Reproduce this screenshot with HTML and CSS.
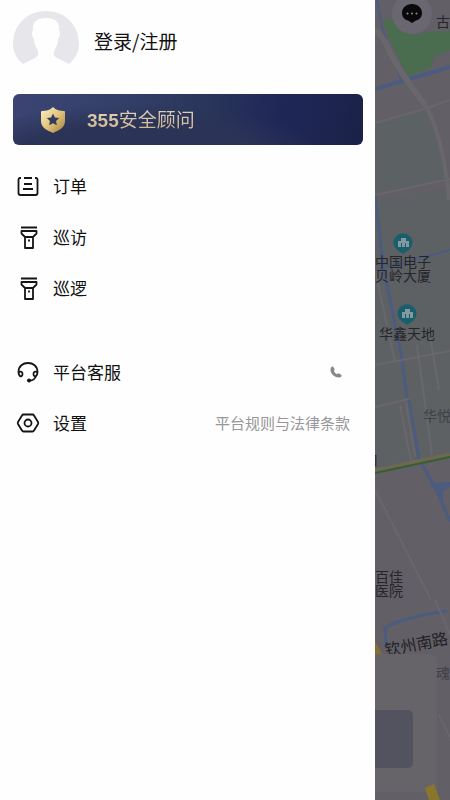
FILE: index.html
```
<!DOCTYPE html>
<html lang="zh-CN">

<head>
    <meta charset="utf-8">
    <meta name="viewport" content="width=device-width, initial-scale=1">
    <title>355安全顾问</title>
    <link rel="stylesheet" href="styles.css">
</head>

<body>
    <div class="screen">
        <div class="drawer">
            <a class="user" href="#login">
                <svg class="avatar" width="66" height="54" viewBox="0 0 66 54" aria-hidden="true">
                    <path fill="#e7e6ea" d="M10 53C3 47 0 40 0 33 0 14 14 0 33 0s33 14 33 33c0 7-3 14-10 20L44 47c-4-2-4-6-2-9 2-3 3-7 3-10 2-2 3-7 1-9 1-8-4-12-13-12S19 11 20 19c-2 2-1 7 1 9 0 3 1 7 3 10 2 3 2 7-2 9z"/>
                </svg>
                <span>登录/注册</span>
            </a>

            <a class="banner" href="#advisor">
                <svg width="26" height="28" viewBox="0 0 26 28" aria-hidden="true">
                    <defs>
                        <linearGradient id="gold" x1="0" y1="0" x2="1" y2="1">
                            <stop offset="0" stop-color="#fff0c4"/>
                            <stop offset=".5" stop-color="#e2c57f"/>
                            <stop offset="1" stop-color="#a37c38"/>
                        </linearGradient>
                    </defs>
                    <path fill="url(#gold)" d="M13 1c3 3 7 4 11 4q1 0 1 1v9c0 6-5 9-12 12C6 24 1 21 1 15V6q0-1 1-1c4 0 8-1 11-4z"/>
                    <path fill="#333c5c" d="M13 7.500l1.900 3.900 4.300.6-3.100 3 .7 4.200-3.800-2-3.800 2 .7-4.200-3.100-3 4.300-.6z"/>
                </svg>
                <span class="banner-text"><b>355</b>安全顾问</span>
            </a>

            <ul class="menu">
                <li>
                    <a href="#orders">
                        <svg class="icon" viewBox="0 0 24 24" aria-hidden="true">
                            <path d="M5 4H4Q2.500 4 2.500 6v13q0 2 2 2h15q2 0 2-2V6q0-2-1.500-2h-1M8 4h8M8 10h8M7 15h10"/>
                        </svg>
                        订单
                    </a>
                </li>
                <li>
                    <a href="#visits">
                        <svg class="icon" viewBox="0 0 24 24" aria-hidden="true">
                            <path d="M5 2.500h16M5.500 6h15v2.500L17 12v11H9V12L5.500 8.500zM9 12h8M13 14.500v2"/>
                        </svg>
                        巡访
                    </a>
                </li>
                <li>
                    <a href="#patrol">
                        <svg class="icon" viewBox="0 0 24 24" aria-hidden="true">
                            <path d="M5 2.500h16M5.500 6h15v2.500L17 12v11H9V12L5.500 8.500zM9 12h8M13 14.500v2"/>
                        </svg>
                        巡逻
                    </a>
                </li>
            </ul>

            <ul class="menu menu-more">
                <li>
                    <a href="#service">
                        <svg class="icon" viewBox="0 0 24 24" aria-hidden="true">
                            <path d="M2.500 12C2.500 6 7 3 12 3s9.500 3 9.500 9M2.500 12.500c2.500-2 4-.5 4 1.500s-1.500 3-2.500 2-1.500-2-1.500-3.500zM21.500 12.500c-2.500-2-4-.5-4 1.500s1.500 3 2.500 2 1.500-2 1.500-3.500zM20 16c-1 3-3 4.500-6 4.500"/>
                            <circle class="dot" cx="13" cy="20.500" r="2"/>
                        </svg>
                        平台客服
                    </a>
                    <a class="side" href="#call" aria-label="拨打电话">
                        <svg class="phone" width="12" height="12" viewBox="0 0 12 12" aria-hidden="true">
                            <path fill="#88868a" d="M3 0.500 4.600 3Q5 4 3.800 4.700 4.500 7 7 8.300 8 7 9 7.500l2.500 1.500q.4 2.500-2.500 2.500C4 11.500.500 7.500.500 3.500.500 1.500 1.500.500 3 .5z"/>
                        </svg>
                    </a>
                </li>
                <li>
                    <a href="#settings">
                        <svg class="icon" viewBox="0 0 24 24" aria-hidden="true">
                            <path d="M7.500 3.500h9q1 0 1.500 1l4 6.500q.5 1 0 2l-4 6.500q-.5 1-1.500 1h-9q-1 0-1.500-1L2 13q-.5-1 0-2l4-6.500q.5-1 1.500-1z"/>
                            <circle cx="12" cy="12" r="3.500"/>
                        </svg>
                        设置
                    </a>
                    <a class="side" href="#terms">平台规则与法律条款</a>
                </li>
            </ul>
        </div>

        <!-- dimmed map left visible beside the drawer -->
        <svg class="map" viewBox="0 0 75 800" preserveAspectRatio="xMinYMin slice" role="img" aria-label="地图">
            <rect width="75" height="800" fill="#625f66"/>
            <path fill="#5c6264" d="M0 122l52-15q15 35 19 75L0 193z"/>
            <path fill="#5e6164" d="M0 200l75-12v265L0 468z"/>
            <path fill="#496d4e" d="M8 21l12-4q14 24 31 15l24-1v19L58 57l-1 10-23 9q-9-13-19-36z"/>

            <g fill="none" stroke="#4c5b80">
                <path stroke-width="4" d="M0 89l75-22"/>
                <path stroke-width="2" d="M2 0l5 27 19 53"/>
                <path stroke-width="3" d="M0 195l3 25 5 45 18 88 6 45M34 400l10 59 16 28 15 34M11 645l-1-17q15-10 62-17"/>
                <path stroke-width="2" d="M0 270l75-20"/>
            </g>
            <path fill="#4c5b80" d="M55 483l20-1v5l-7 4v13z"/>

            <g fill="none" stroke="#69666c" stroke-width="2">
                <path stroke-width="6" d="M0 30q8 6 14 20 10 22 37 56"/>
                <path stroke-width="4" d="M51 106q18 34 23 94"/>
                <path d="M0 123l52-15 23-8M0 195l75-16M0 270l20 92M0 365l75-14M0 407l34-8M25 405l11 56M31 403l9 54M42 345l15 110M54 330l10 60M0 490l56 110M60 600l15 34M64 715l11 22"/>
            </g>

            <path fill="none" stroke="#6c6852" stroke-width="5" d="M0 471l75-16"/>
            <path fill="none" stroke="#355e32" stroke-width="2" d="M0 473l75-16"/>
            <path fill="#83712c" d="M0 641l7 13H0z"/>

            <g class="pin">
                <path fill="#185f6b" d="M28 254l-6-4a9.500 9.500 0 1 1 12 0z"/>
                <path fill="#83999f" d="M23 247v-6h3v-3h5v3h3v6h-3v-4h-1v4h-3v-4h-1v4z"/>
            </g>
            <g class="pin">
                <path fill="#185f6b" d="M32 325l-6-4a9.500 9.500 0 1 1 12 0z"/>
                <path fill="#83999f" d="M27 318v-6h3v-3h5v3h3v6h-3v-4h-1v4h-3v-4h-1v4z"/>
            </g>

            <g class="place">
                <text x="0" y="267">中国电子</text>
                <text x="0" y="281">贝岭大厦</text>
                <text x="4" y="339">华鑫天地</text>
                <text x="0" y="582">百佳</text>
                <text x="0" y="596">医院</text>
                <text x="61" y="27">古</text>
                <text x="-11" y="465">口</text>
            </g>
            <text class="place faint" x="48" y="421">华悦</text>
            <text class="road" transform="translate(11 656) rotate(-11)">钦州南路</text>

            <!-- order card at the bottom of the map -->
            <path fill="#666369" d="M0 654h54q8 0 8 8v130H0z"/>
            <path fill="#535360" d="M0 710h32q6 0 6 6v46q0 6-6 6H0z"/>
            <path fill="#89762d" d="M50 788l9-4 6 16H54z"/>
            <text class="place faint" x="61" y="678">魂</text>

            <circle cx="37" cy="14" r="20" fill="#6b6770"/>
            <path fill="#09090b" d="M37 23l-4-2.500c-4-1-6-4-6-7.500 0-5 4-9 10-9s10 4 10 9c0 3.500-2 6.500-6 7.500z"/>
            <g fill="#8f8d92">
                <circle cx="32.500" cy="13.500" r="1"/>
                <circle cx="37" cy="13.500" r="1"/>
                <circle cx="41.500" cy="13.500" r="1"/>
            </g>
        </svg>
    </div>
</body>

</html>
```
FILE: styles.css
```
body {
    margin: 0;
    background: #fefefe;
    color: #111;
    font: 17px "Noto Sans CJK SC", sans-serif;
}

a {
    color: inherit;
    text-decoration: none;
}

.screen {
    display: grid;
    grid-template-columns: 5fr 1fr;
    min-height: 100vh;
}

.drawer {
    padding: 11px 12px 11px 13px;
}

.user {
    display: flex;
    gap: 15px;
    font-size: 19px;
    line-height: 60px;
}

.avatar {
    display: block;
}

.banner {
    display: flex;
    align-items: center;
    gap: 21px;
    height: 51px;
    margin-top: 23px;
    padding-left: 27px;
    border-radius: 6px;
    background:
        radial-gradient(ellipse at 35% 130%, #2b3357 0, #2b3357 38%, transparent 60%),
        linear-gradient(100deg, #3b4473 0, #344069 30%, #29355a 55%, #1f2757 75%, #1b2248 100%);
}

.banner-text {
    background: linear-gradient(#eadcc0, #c4ac85);
    -webkit-background-clip: text;
    background-clip: text;
    color: transparent;
    font-size: 19px;
    line-height: 28px;
}

.banner-text b {
    font-family: "Liberation Sans", sans-serif;
}

.menu {
    margin: 15px 0 0;
    padding: 0;
    list-style: none;
}

.menu-more {
    margin-top: 33px;
}

.menu li {
    display: flex;
    justify-content: space-between;
    align-items: center;
    height: 51px;
}

.menu a {
    display: flex;
    align-items: center;
    gap: 13px;
}

.icon {
    width: 24px;
    height: 24px;
    margin-left: 3px;
    fill: none;
    stroke: #151515;
    stroke-width: 1.8;
    stroke-linejoin: round;
}

.icon .dot {
    fill: #151515;
    stroke: none;
}

.menu .side {
    padding-right: 13px;
    color: #98969a;
    font-size: 15px;
}

.phone {
    margin-right: 8px;
}

.map {
    display: block;
    width: 100%;
    height: 100%;
}

.place {
    fill: #26252b;
    font-size: 14px;
}

.faint {
    fill: #414046;
}

.road {
    fill: #222127;
    font-size: 16px;
}
```
